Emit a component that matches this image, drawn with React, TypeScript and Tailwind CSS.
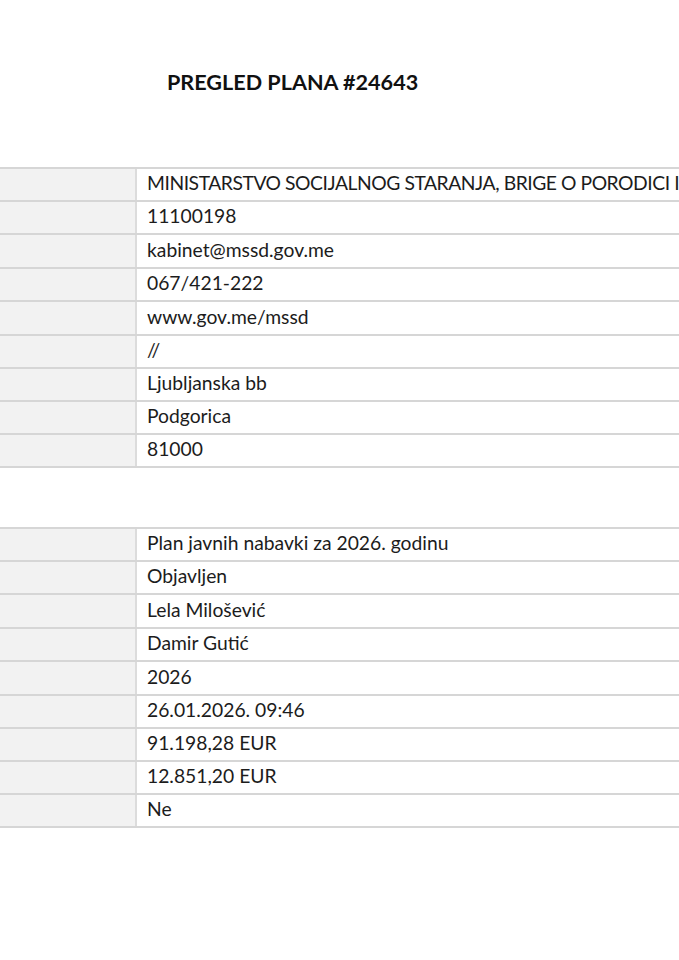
const org = [
  "MINISTARSTVO SOCIJALNOG STARANJA, BRIGE O PORODICI I DEMOGRAFIJE",
  "11100198",
  "kabinet@mssd.gov.me",
  "067/421-222",
  "www.gov.me/mssd",
  "//",
  "Ljubljanska bb",
  "Podgorica",
  "81000",
];

const plan = [
  "Plan javnih nabavki za 2026. godinu",
  "Objavljen",
  "Lela Milošević",
  "Damir Gutić",
  "2026",
  "26.01.2026. 09:46",
  "91.198,28 EUR",
  "12.851,20 EUR",
  "Ne",
];

// row heights alternate a little so nine rows span 299px like the print
const rowH = ["h-[31px]", "h-[31px]", "h-[32px]", "h-[31px]", "h-[32px]", "h-[31px]", "h-[31px]", "h-[31px]", "h-[31px]"];

const InfoTable = ({ rows }: { rows: string[] }) => (
  <div className="w-[900px] border-t-2 border-[#d6d6d6]">
    {rows.map((value, i) => (
      <div key={i} className={`flex box-content border-b-2 border-[#d6d6d6] ${rowH[i]}`}>
        {/* label column, mostly cut off by the page edge */}
        <div className="w-[137px] shrink-0 bg-[#f2f2f2] border-r-2 border-[#dcdcdc]" />
        <div
          className={`flex-1 flex items-center pl-[10px] pb-[2px] text-[19.3px] text-[#1c1c1c] whitespace-nowrap ${
            value === value.toUpperCase() && /[A-Z]{4}/.test(value) ? "tracking-[-0.45px]" : ""
          }`}
        >
          {value}
        </div>
      </div>
    ))}
  </div>
);

export default function App() {
  return (
    <div
      className="w-[679px] h-[960px] overflow-hidden bg-white"
      style={{ fontFamily: "Lato, 'Open Sans', sans-serif" }}
    >
      <h1 className="pl-[167px] pt-[69px] text-[21.6px] font-bold text-[#111] leading-[26px]">
        PREGLED PLANA #24643
      </h1>

      <div className="mt-[72px]">
        <InfoTable rows={org} />
      </div>

      <div className="mt-[59px]">
        <InfoTable rows={plan} />
      </div>
    </div>
  );
}
